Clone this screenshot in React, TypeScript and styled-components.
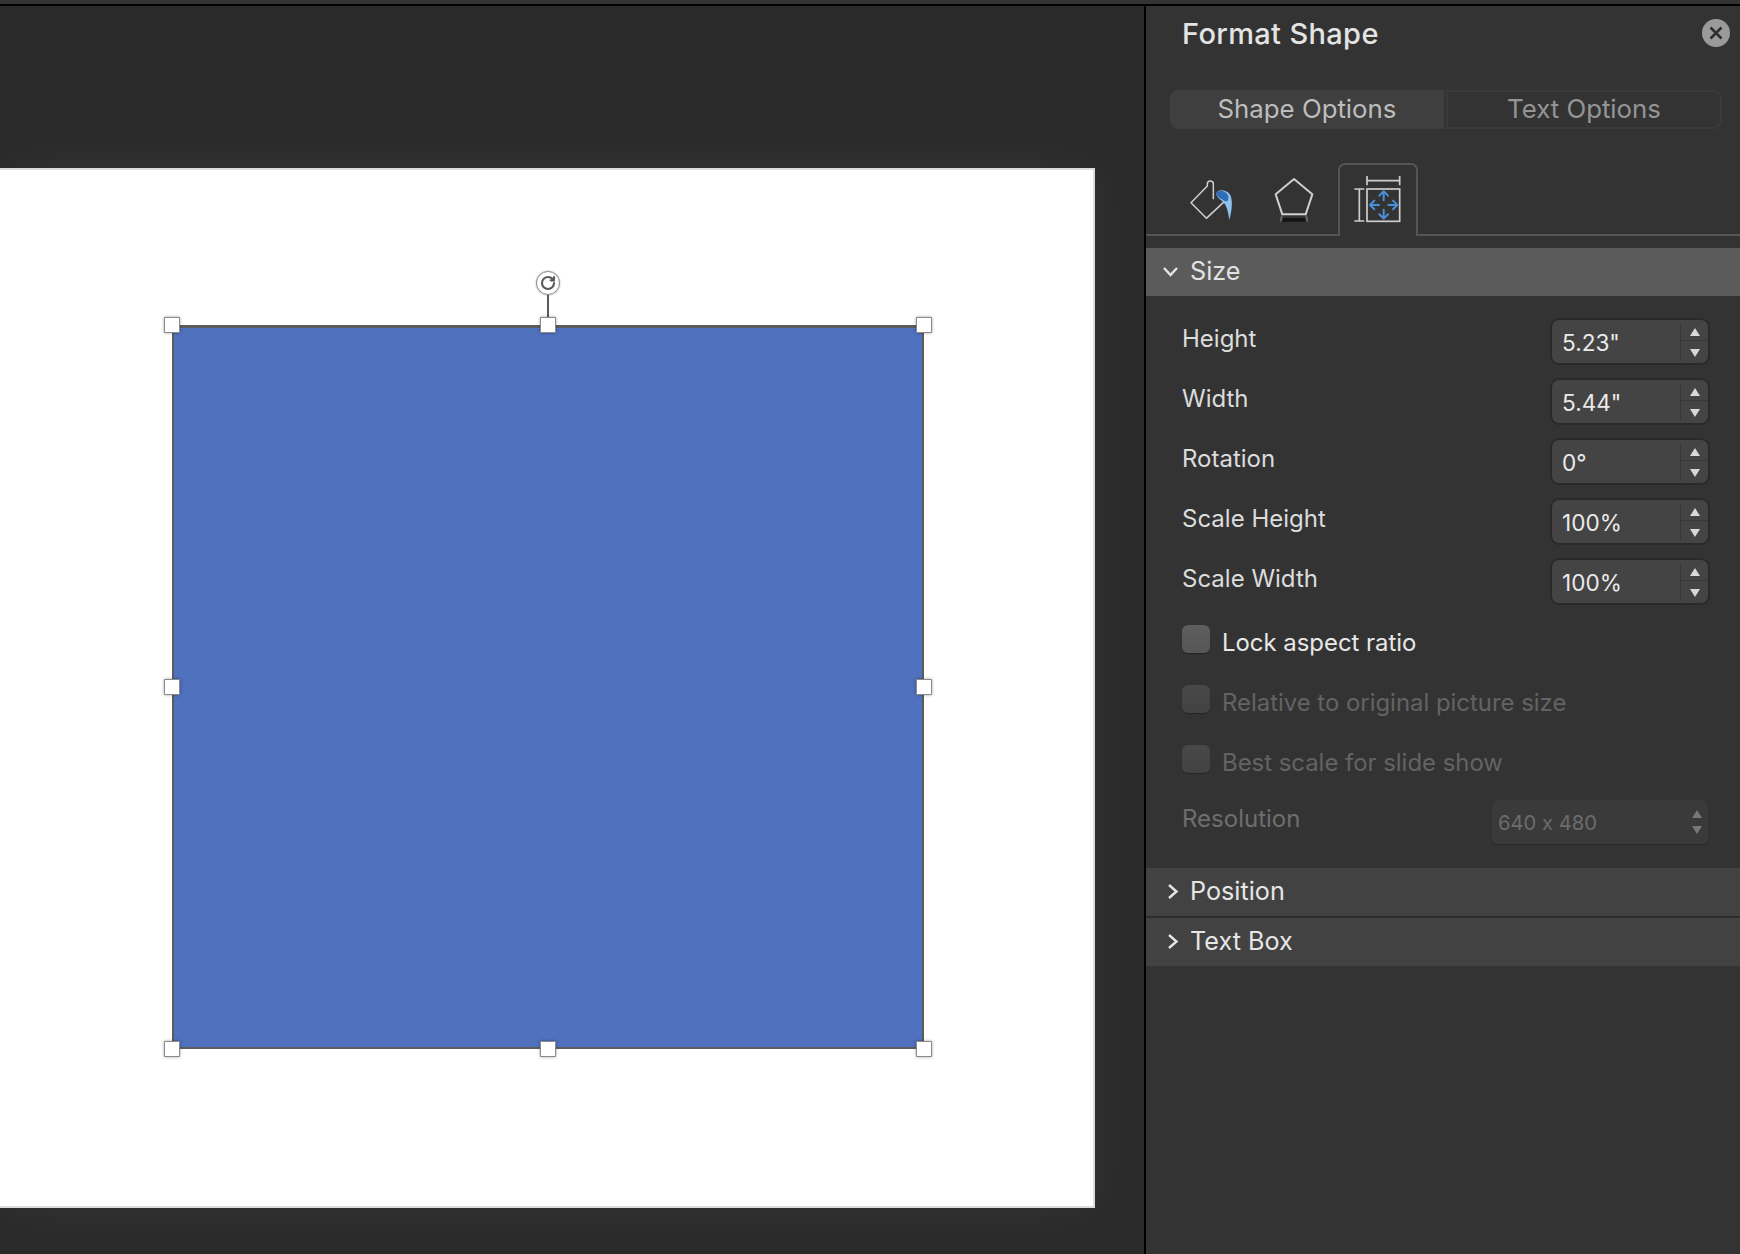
import React from "react";
import styled, { createGlobalStyle } from "styled-components";
import { RotateCw } from "lucide-react";

const Global = createGlobalStyle`
  html, body { margin: 0; padding: 0; background: #333; }
  * { box-sizing: border-box; }
  body { font-family: Inter, "Liberation Sans", sans-serif; font-feature-settings: "calt" 0; overflow: hidden; }
`;

const Page = styled.div`
  width: 1740px;
  height: 1254px;
  display: flex;
  flex-direction: column;
  overflow: hidden;
`;
const TopStrip = styled.div`
  height: 6px;
  background: #333;
  border-bottom: 2px solid #000;
`;
const Main = styled.div`
  flex: 1;
  display: flex;
  min-height: 0;
`;
const Canvas = styled.div`
  width: 1146px;
  padding-top: 162px;
  background: #2a2a2a;
  border-right: 2px solid #000;
  overflow: hidden;
`;
const Slide = styled.div`
  width: 1095px;
  height: 1040px;
  padding: 155px 0 0 172px;
  background: #fff;
  border: solid #dcdcdc;
  border-width: 2px 2px 2px 0;
  box-shadow: 0 0 50px rgba(255, 255, 255, 0.05);
`;
const Shape = styled.div`
  position: relative;
  width: 752px;
  height: 724px;
  background: #5071bd;
  box-shadow: inset 0 3px 0 #5c5c5c, inset 2px 0 0 #5c5c5c, inset -2px 0 0 #5c5c5c, inset 0 -2px 0 #5c5c5c;
`;
const Handle = styled.span<{ $x: number; $y: number }>`
  position: absolute;
  left: calc(${(p) => p.$x}% - 8px);
  top: calc(${(p) => p.$y}% - 8px);
  width: 16px;
  height: 16px;
  background: #fff;
  border: 1px solid #8c8c8c;
  box-shadow: 0 0 3px rgba(0, 0, 0, 0.35);
`;
const RotateStem = styled.span`
  position: absolute;
  left: calc(50% - 1px);
  top: -31px;
  width: 2px;
  height: 24px;
  background: #5a5a5a;
`;
const RotateKnob = styled.span`
  position: absolute;
  left: calc(50% - 12px);
  top: -54px;
  width: 24px;
  height: 24px;
  border-radius: 50%;
  background: #fff;
  border: 1px solid #8c8c8c;
  box-shadow: 0 0 2px rgba(0, 0, 0, 0.3);
  display: flex;
  align-items: center;
  justify-content: center;
  color: #5a5a5a;
`;

const Panel = styled.aside`
  flex: 1;
  display: flex;
  flex-direction: column;
  background: #333;
  min-width: 0;
`;
const TitleBar = styled.div`
  height: 54px;
  display: flex;
  align-items: center;
  justify-content: space-between;
  padding: 0 10px 0 36px;
`;
const Title = styled.h1`
  margin: 0;
  font-size: 29px;
  font-weight: 500;
  color: #e4e4e4;
  letter-spacing: 0.35px;
`;
const CloseButton = styled.button`
  width: 28px;
  height: 28px;
  padding: 0;
  border: 0;
  border-radius: 50%;
  background: #9a9a9a;
  display: flex;
  align-items: center;
  justify-content: center;
`;
const Segments = styled.div`
  margin: 30px 18px 0 24px;
  height: 39px;
  display: flex;
`;
const Segment = styled.div<{ $active?: boolean }>`
  flex: ${(p) => (p.$active ? "0 0 274px" : "1")};
  display: flex;
  align-items: center;
  justify-content: center;
  padding-bottom: 2px;
  font-size: 25.8px;
  color: ${(p) => (p.$active ? "#bdbdbd" : "#959595")};
  background: ${(p) => (p.$active ? "#3f3f3f" : "transparent")};
  border: 2px solid ${(p) => (p.$active ? "#3f3f3f" : "#3a3a3a")};
  border-radius: ${(p) => (p.$active ? "8px 0 0 8px" : "0 8px 8px 0")};
  margin-left: ${(p) => (p.$active ? "0" : "2px")};
`;
const TabRow = styled.div`
  margin-top: 33px;
  height: 74px;
  display: flex;
  align-items: flex-end;
  padding-left: 40.67px;
  border-bottom: 2px solid #555;
`;
const IconSlot = styled.div<{ $gap: number }>`
  display: flex;
  margin-right: ${(p) => p.$gap}px;
  padding-bottom: 10.67px;
`;
const ActiveTab = styled.div`
  width: 80px;
  height: 73px;
  margin-bottom: -2px;
  background: #333;
  border: 2px solid #555;
  border-bottom: 0;
  border-radius: 7px 7px 0 0;
  display: flex;
  justify-content: center;
  padding: 9px 2px 0 0;
`;
const SectionHeader = styled.div<{ $open?: boolean }>`
  height: 48px;
  display: flex;
  align-items: center;
  padding-left: ${(p) => (p.$open ? "17px" : "22px")};
  padding-bottom: 2px;
  gap: ${(p) => (p.$open ? "12px" : "12px")};
  font-size: 25.2px;
  color: ${(p) => (p.$open ? "#e2e2e2" : "#e6e6e6")};
  background: ${(p) => (p.$open ? "#5b5b5b" : "#424242")};
`;
const SizeHeader = styled(SectionHeader)`
  margin-top: 12px;
`;
const Fields = styled.div`
  margin-top: 22px;
  display: flex;
  flex-direction: column;
  gap: 13px;
  padding: 0 30px 0 36px;
`;
const FieldRow = styled.div`
  height: 47px;
  display: flex;
  align-items: center;
  justify-content: space-between;
`;
const FieldLabel = styled.span<{ $disabled?: boolean }>`
  font-size: 24px;
  padding-bottom: 7px;
  color: ${(p) => (p.$disabled ? "#6e6e6e" : "#dcdcdc")};
`;
const NumberField = styled.div`
  width: 160px;
  height: 47px;
  display: flex;
  align-items: center;
  padding-left: 10px;
  background: #444;
  border: 2px solid #2a2a2a;
  border-radius: 9px;
`;
const FieldValue = styled.span`
  flex: 1;
  font-size: 22.6px;
  padding-top: 1px;
  color: #eaeaea;
`;
const Stepper = styled.div`
  width: 28px;
  height: 37px;
  margin-top: 1px;
  display: flex;
  flex-direction: column;
  border-left: 1px solid #383838;
`;
const StepCell = styled.div<{ $down?: boolean }>`
  flex: 1;
  display: flex;
  align-items: center;
  justify-content: center;
  padding: ${(p) => (p.$down ? "5px" : "1px")} 0 0 1px;
  border-top: ${(p) => (p.$down ? "1px solid #383838" : "0")};
`;
const Triangle = styled.span<{ $down?: boolean; $dim?: boolean }>`
  width: 0;
  height: 0;
  border-left: 5.5px solid transparent;
  border-right: 5.5px solid transparent;
  border-${(p) => (p.$down ? "top" : "bottom")}: 8px solid ${(p) => (p.$dim ? "#777" : "#d8d8d8")};
`;
const Checks = styled.div`
  margin-top: 20px;
  display: flex;
  flex-direction: column;
  gap: 32px;
  padding-left: 36px;
`;
const CheckRow = styled.label`
  height: 28px;
  display: flex;
  gap: 12px;
`;
const CheckBox = styled.span<{ $disabled?: boolean }>`
  flex: none;
  width: 28px;
  height: 28px;
  border-radius: 6px;
  background: ${(p) =>
    p.$disabled
      ? "linear-gradient(#484848, #424242)"
      : "linear-gradient(#5e5e5e, #565656)"};
  box-shadow: 0 1px 1px rgba(0, 0, 0, 0.3);
`;
const CheckText = styled.span<{ $disabled?: boolean }>`
  font-size: 23.9px;
  line-height: 28px;
  padding-top: 4px;
  white-space: nowrap;
  color: ${(p) => (p.$disabled ? "#636363" : "#e8e8e8")};
`;
const ResolutionRow = styled.div`
  margin-top: 27px;
  height: 44px;
  display: flex;
  align-items: center;
  justify-content: space-between;
  padding: 0 32px 0 36px;
`;
const ResolutionLabel = styled.span`
  font-size: 24px;
  padding-bottom: 7px;
  color: #6e6e6e;
`;
const SelectBox = styled.div`
  width: 216px;
  height: 44px;
  display: flex;
  align-items: center;
  justify-content: space-between;
  padding: 0 6px;
  background: #3a3a3a;
  border-radius: 5px;
  box-shadow: 0 1px 1px rgba(0, 0, 0, 0.2);
`;
const SelectValue = styled.span`
  font-size: 20.2px;
  color: #6c6c6c;
`;
const SelectArrows = styled.span`
  display: flex;
  flex-direction: column;
  gap: 8px;
`;
const Collapsed = styled.div`
  margin-top: 24px;
  display: flex;
  flex-direction: column;
  gap: 2px;
  background: #2d2d2d;
`;

const Ink = styled.svg`
  display: block;
  overflow: visible;
`;

const BucketIcon = () => (
  <Ink width="50" height="48.33" viewBox="50 45 150 145" fill="none">
    <path
      d="M129 118V72a9 9 0 0 0-18 0v6L62 128l46 47 57-53"
      stroke="#cfcfcf"
      strokeWidth="4.5"
      strokeLinejoin="round"
    />
    <path
      d="M138 100C142 88 165 86 178 102C188 116 186 150 177 180C174 155 168 135 158 125C148 118 138 112 138 100z"
      fill="#8fc0ee"
    />
    <path
      d="M138 100C142 90 162 88 172 104C178 118 172 128 162 122C152 116 138 112 138 100z"
      fill="#2f6db8"
    />
  </Ink>
);

const PentagonIcon = () => (
  <Ink width="46.67" height="48.33" viewBox="300 45 140 145" fill="none">
    <path d="M372 57l55 46-20 60h-70l-20-60z" stroke="#cfcfcf" strokeWidth="6" strokeLinejoin="round" />
    <path d="M340 174h64l3 11h-70z" fill="#141414" />
    <path d="M336 166l-5 19M408 166l5 19" stroke="#6a6a6a" strokeWidth="5" />
  </Ink>
);

const SizeIcon = () => (
  <Ink width="50" height="49.33" viewBox="545 42 150 148" fill="none">
    <g stroke="#cfcfcf" strokeWidth="5">
      <path d="M590 48v28M688 48v28M590 62h98" />
      <path d="M552 87h30M552 183h30M567 87v96" />
      <rect x="590" y="87" width="98" height="97" />
    </g>
    <g stroke="#4a90d9" strokeWidth="6" strokeLinecap="round" strokeLinejoin="round">
      <path d="M640 95v26M627 107l13-13 13 13" />
      <path d="M640 149v26M627 163l13 13 13-13" />
      <path d="M600 135h26M612 122l-13 13 13 13" />
      <path d="M654 135h26M668 122l13 13-13 13" />
    </g>
  </Ink>
);

const Chevron = ({ open }: { open?: boolean }) =>
  open ? (
    <Ink width="15" height="9" viewBox="0 0 15 9" fill="none">
      <path d="M1 1l6.5 7L14 1" stroke="#e6e6e6" strokeWidth="2.4" />
    </Ink>
  ) : (
    <Ink width="10" height="15" viewBox="0 0 10 15" fill="none">
      <path d="M1 1l7.5 6.5L1 14" stroke="#e6e6e6" strokeWidth="2.4" />
    </Ink>
  );

const fields = [
  ["Height", '5.23"'],
  ["Width", '5.44"'],
  ["Rotation", "0°"],
  ["Scale Height", "100%"],
  ["Scale Width", "100%"],
];
const checks = [
  ["Lock aspect ratio", false],
  ["Relative to original picture size", true],
  ["Best scale for slide show", true],
] as const;
const handles = [
  [0, 0],
  [50, 0],
  [100, 0],
  [0, 50],
  [100, 50],
  [0, 100],
  [50, 100],
  [100, 100],
];

export default function App() {
  return (
    <Page>
      <Global />
      <TopStrip />
      <Main>
        <Canvas>
          <Slide>
            <Shape>
              <RotateStem />
              <RotateKnob>
                <RotateCw size={16} strokeWidth={3.2} />
              </RotateKnob>
              {handles.map(([x, y]) => (
                <Handle key={`${x}-${y}`} $x={x} $y={y} />
              ))}
            </Shape>
          </Slide>
        </Canvas>
        <Panel>
          <TitleBar>
            <Title>Format Shape</Title>
            <CloseButton aria-label="Close">
              <Ink width="14" height="14" viewBox="0 0 14 14" fill="none">
                <path d="M1.5 1.5l11 11M12.5 1.5l-11 11" stroke="#2e2e2e" strokeWidth="2.6" />
              </Ink>
            </CloseButton>
          </TitleBar>
          <Segments>
            <Segment $active>Shape Options</Segment>
            <Segment>Text Options</Segment>
          </Segments>
          <TabRow>
            <IconSlot $gap={33.3}>
              <BucketIcon />
            </IconSlot>
            <IconSlot $gap={21.3}>
              <PentagonIcon />
            </IconSlot>
            <ActiveTab>
              <SizeIcon />
            </ActiveTab>
          </TabRow>
          <SizeHeader $open>
            <Chevron open />
            Size
          </SizeHeader>
          <Fields>
            {fields.map(([label, value]) => (
              <FieldRow key={label}>
                <FieldLabel>{label}</FieldLabel>
                <NumberField>
                  <FieldValue>{value}</FieldValue>
                  <Stepper>
                    <StepCell>
                      <Triangle />
                    </StepCell>
                    <StepCell $down>
                      <Triangle $down />
                    </StepCell>
                  </Stepper>
                </NumberField>
              </FieldRow>
            ))}
          </Fields>
          <Checks>
            {checks.map(([label, disabled]) => (
              <CheckRow key={label}>
                <CheckBox $disabled={disabled} />
                <CheckText $disabled={disabled}>{label}</CheckText>
              </CheckRow>
            ))}
          </Checks>
          <ResolutionRow>
            <ResolutionLabel>Resolution</ResolutionLabel>
            <SelectBox>
              <SelectValue>640 x 480</SelectValue>
              <SelectArrows>
                <Triangle $dim />
                <Triangle $dim $down />
              </SelectArrows>
            </SelectBox>
          </ResolutionRow>
          <Collapsed>
            <SectionHeader>
              <Chevron />
              Position
            </SectionHeader>
            <SectionHeader>
              <Chevron />
              Text Box
            </SectionHeader>
          </Collapsed>
        </Panel>
      </Main>
    </Page>
  );
}
